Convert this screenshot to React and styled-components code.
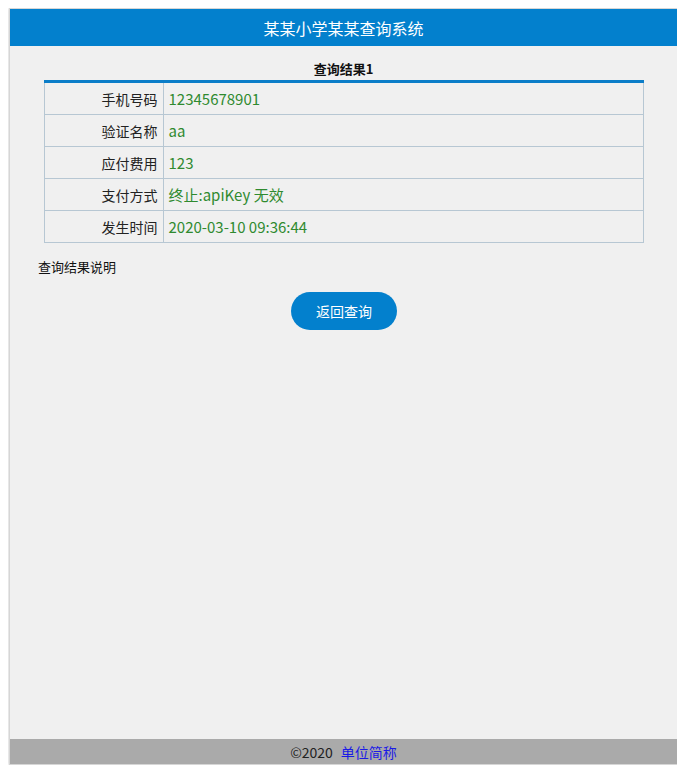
import React from 'react';
import styled, { createGlobalStyle } from 'styled-components';

const GlobalStyle = createGlobalStyle`
  body {
    margin: 8px;
    background: #ffffff;
    font-family: "Noto Sans CJK SC", "Noto Sans", sans-serif;
  }
`;

const Page = styled.div`
  width: 667px;
  height: 755px;
  margin-left: 1px;
  border: 1px solid #d6d6d6;
  box-shadow: 0 0 3px rgba(0, 0, 0, 0.25);
  background: #f0f0f0;
  display: flex;
  flex-direction: column;
`;

const Header = styled.div`
  height: 37px;
  background: #0380cd;
  color: #ffffff;
  font-size: 16px;
  display: flex;
  align-items: center;
  justify-content: center;
`;

const Main = styled.div`
  flex: 1;
  padding: 12px 0 0;
  display: flex;
  flex-direction: column;
`;

const Caption = styled.div`
  text-align: center;
  font-size: 13px;
  font-weight: bold;
  color: #111;
  line-height: 22px;
`;

const Table = styled.table`
  width: 600px;
  margin: 0 auto;
  border-collapse: collapse;
  border-top: 3px solid #0b7dc8;
`;

const Cell = styled.td`
  height: 31px;
  border: 1px solid #b7c7d3;
  padding: 0 5px;
  font-size: ${p => (p.label ? '14px' : '15px')};
  text-align: ${p => (p.label ? 'right' : 'left')};
  color: ${p => (p.label ? '#222' : '#2f8a2f')};
  width: ${p => (p.label ? '108px' : 'auto')};
`;

const Note = styled.div`
  font-size: 13px;
  color: #111;
  margin: 14px 0 0 28px;
`;

const Back = styled.button`
  align-self: center;
  margin-top: 16px;
  margin-left: 1px;
  width: 106px;
  height: 38px;
  border: none;
  border-radius: 19px;
  background: #0380cd;
  color: #ffffff;
  font-family: inherit;
  font-size: 14px;
`;

const Footer = styled.div`
  height: 25px;
  background: #aaaaaa;
  display: flex;
  align-items: center;
  justify-content: center;
  gap: 8px;
  font-size: 14px;
  color: #222;
`;

const Link = styled.a`
  color: #1a1ae6;
`;

const rows = [
  ['手机号码', '12345678901'],
  ['验证名称', 'aa'],
  ['应付费用', '123'],
  ['支付方式', '终止:apiKey 无效'],
  ['发生时间', '2020-03-10 09:36:44'],
];

export default function App() {
  return (
    <>
      <GlobalStyle />
      <Page>
        <Header>某某小学某某查询系统</Header>
        <Main>
          <Caption>查询结果1</Caption>
          <Table>
            <tbody>
              {rows.map(([k, v]) => (
                <tr key={k}>
                  <Cell label>{k}</Cell>
                  <Cell>{v}</Cell>
                </tr>
              ))}
            </tbody>
          </Table>
          <Note>查询结果说明</Note>
          <Back>返回查询</Back>
        </Main>
        <Footer>
          <span>©2020</span>
          <Link>单位简称</Link>
        </Footer>
      </Page>
    </>
  );
}
